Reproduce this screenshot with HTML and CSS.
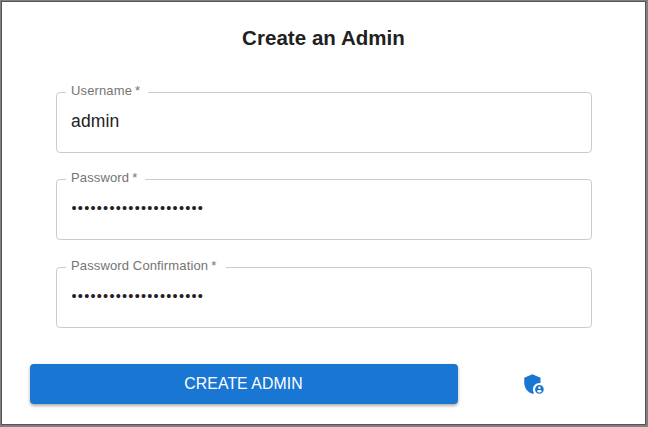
FILE: index.html
```html
<!DOCTYPE html>
<html lang="en">
<head>
<meta charset="utf-8">
<title>Create an Admin</title>
<link rel="stylesheet" href="styles.css">
</head>
<body>
<main class="dialog">
  <h1 class="title">Create an Admin</h1>
  <form class="form">
    <div class="fields">
      <fieldset class="field">
        <legend class="notch username"><label class="label" for="username">Username<span class="star">*</span></label></legend>
        <input class="input" id="username" type="text" value="admin">
      </fieldset>
      <fieldset class="field">
        <legend class="notch password"><label class="label" for="password">Password<span class="star">*</span></label></legend>
        <input class="input masked" id="password" type="password" value="aaaaaaaaaaaaaaaaaaaaa">
      </fieldset>
      <fieldset class="field">
        <legend class="notch confirmation"><label class="label" for="confirmation">Password Confirmation<span class="star">*</span></label></legend>
        <input class="input masked" id="confirmation" type="password" value="aaaaaaaaaaaaaaaaaaaaa">
      </fieldset>
    </div>
    <div class="actions">
      <button class="submit" type="button">CREATE ADMIN</button>
      <div class="badge">
        <svg class="shield" viewBox="0 0 24 24" aria-hidden="true">
          <path d="M17 11c.34 0 .67.04 1 .09V6.27L10.5 3 3 6.27v4.91c0 4.54 3.2 8.79 7.5 9.82.55-.13 1.08-.32 1.6-.55-.69-.98-1.1-2.17-1.1-3.45 0-3.31 2.69-6 6-6z"/>
          <path d="M17 13c-2.21 0-4 1.79-4 4s1.790 4 4 4 4-1.790 4-4-1.790-4-4-4zm0 1.380c.62 0 1.120.51 1.120 1.120s-.51 1.120-1.120 1.120-1.120-.51-1.120-1.120.5-1.120 1.120-1.120zm0 5.370c-.93 0-1.740-.46-2.240-1.170.05-.72 1.510-1.080 2.240-1.080s2.190.36 2.240 1.080c-.5.71-1.310 1.170-2.240 1.170z"/>
        </svg>
      </div>
    </div>
  </form>
</main>
</body>
</html>
```
FILE: styles.css
```css
* { box-sizing: border-box; }
body {
  margin: 0;
  height: 427px;
  padding: 1px 2px 2px 1px;
  background: #808080;
  font-family: "Liberation Sans", Arial, sans-serif;
  color: #212121;
}
.dialog {
  height: 424px;
  border: 1px solid #555;
  background: #fff;
  overflow: hidden;
}
.title {
  margin: 22px 0 0;
  height: 28px;
  line-height: 28px;
  font-size: 20.5px;
  font-weight: 700;
  letter-spacing: 0.05px;
  text-align: center;
}
.form { padding: 31px 0 0 28px; }
.fields {
  display: flex;
  flex-direction: column;
  gap: 17.4px;
  width: 536px;
  margin-left: 26px;
}
.field {
  height: 70px;
  min-width: 0;
  margin: 0;
  padding: 0 14px;
  border: 1px solid #cbcbcb;
  border-radius: 4px;
}
.notch {
  height: 19px;
  margin-left: -5px;
  padding: 0 5px;
  line-height: 16px;
  font-size: 13px;
  letter-spacing: 0.13px;
  color: #747474;
  white-space: nowrap;
}
.username { width: 82px; }
.password { width: 79px; }
.confirmation { width: 160px; }
.star { margin-left: 3px; }
.input {
  display: block;
  width: 100%;
  height: 39px;
  padding: 0;
  border: 0;
  outline: 0;
  background: transparent;
  color: #212121;
  font: 17.5px/39px "Liberation Sans", Arial, sans-serif;
  letter-spacing: 0.17px;
}
.masked {
  padding-left: 0.5px;
  font-size: 14.5px;
  letter-spacing: 1.24px;
}
.actions {
  display: flex;
  align-items: center;
  margin-top: 36.2px;
}
.submit {
  width: 428px;
  height: 40px;
  padding: 0 1px 0 0;
  border: 0;
  border-radius: 4px;
  background: #1976d2;
  box-shadow: 0 2px 3px rgba(0,0,0,.25), 0 1px 4px rgba(0,0,0,.12);
  color: #fff;
  font: 15.8px/40px "Liberation Sans", Arial, sans-serif;
  letter-spacing: 0.08px;
}
.badge { display: flex; margin: 0 0 0 63px; }
.shield { width: 26px; height: 26px; fill: #1976d2; }
```
